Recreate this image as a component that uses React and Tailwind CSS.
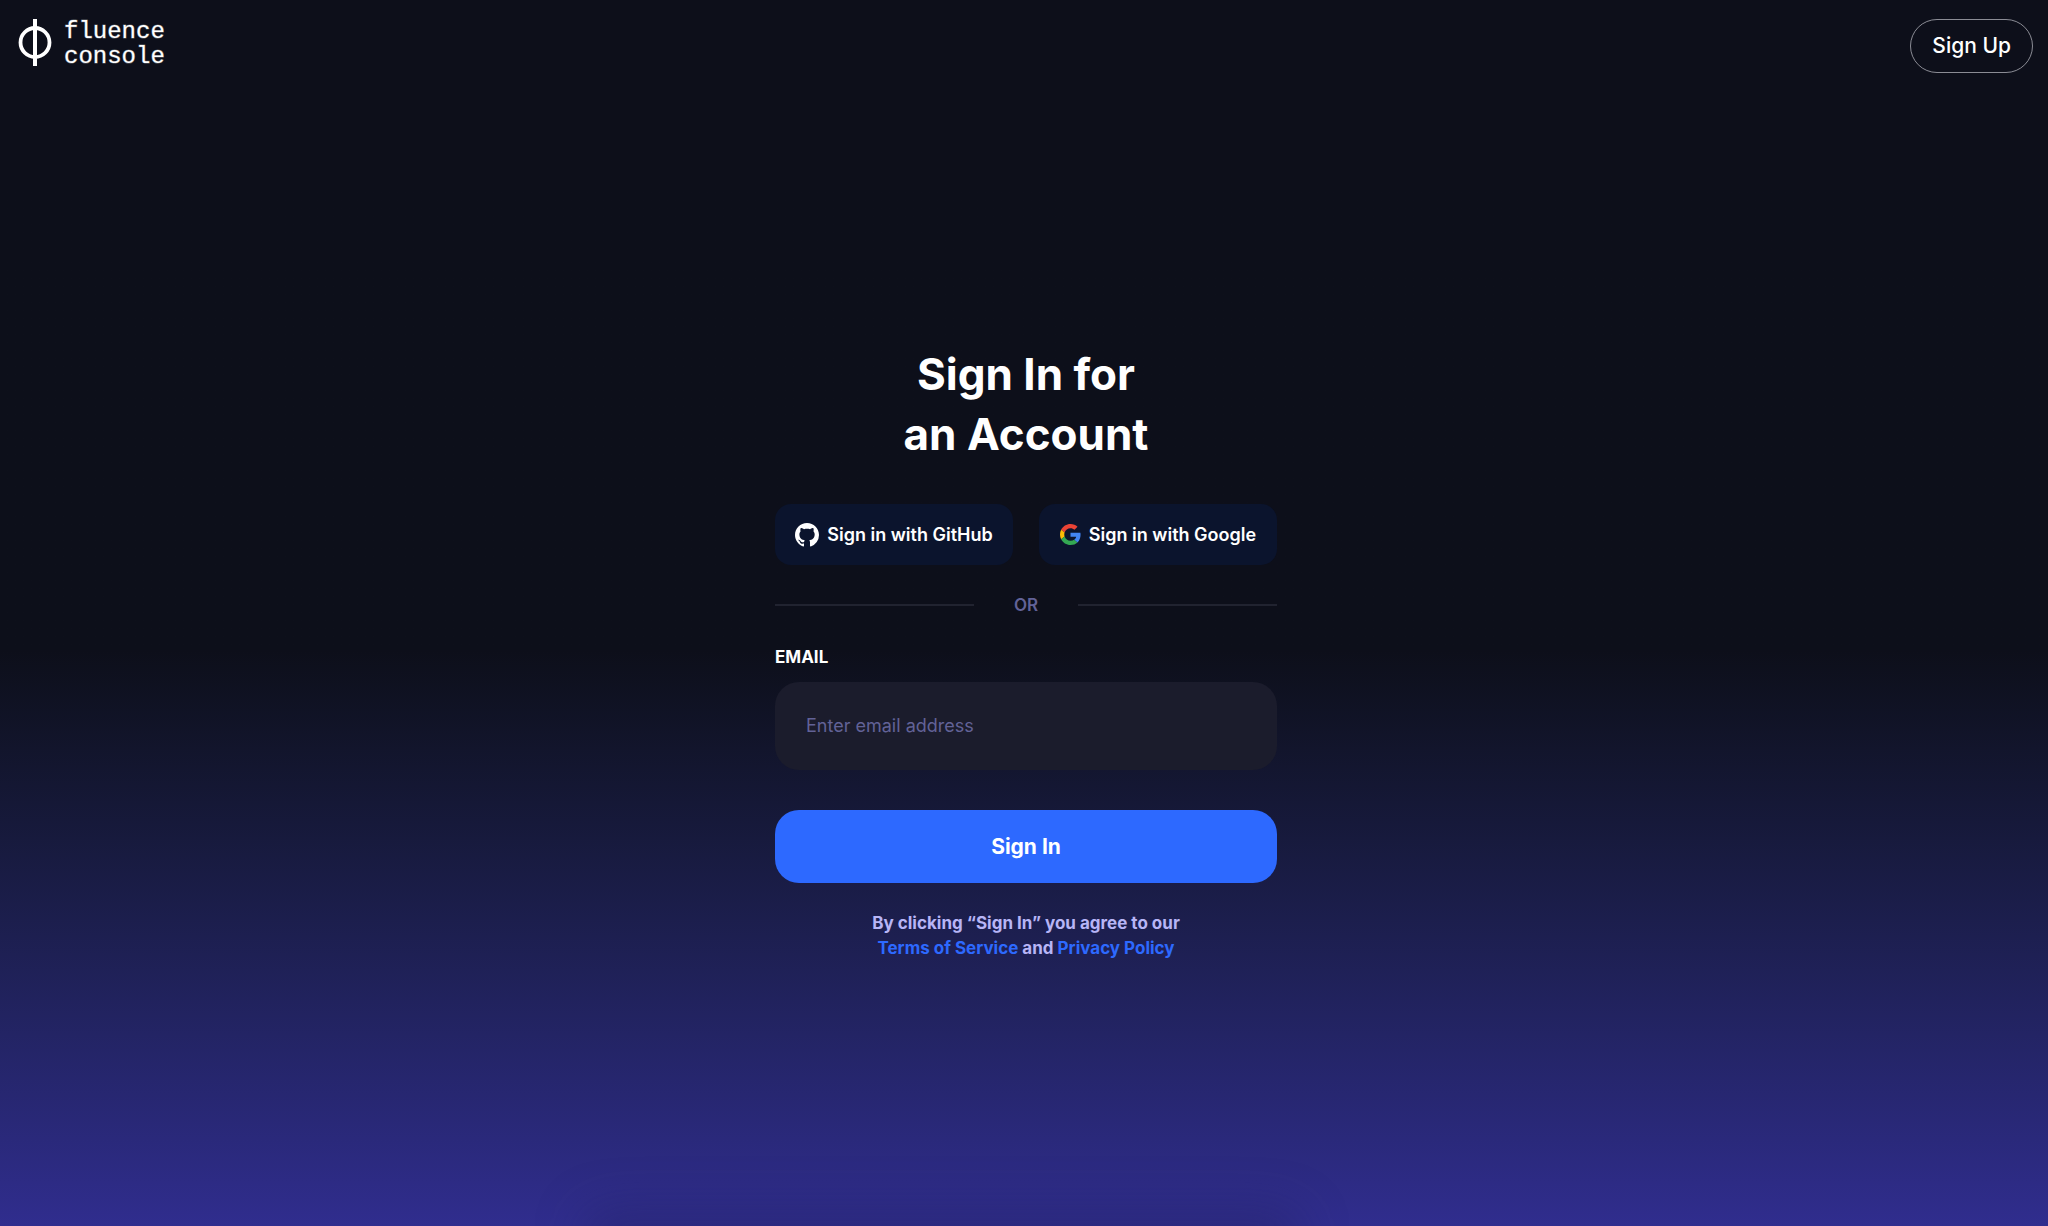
function FluenceMark() {
  return (
    <svg viewBox="0 0 34 48" className="h-12 w-[34px]" fill="none" stroke="#fff" aria-hidden="true">
      <circle cx="17" cy="23.5" r="14.5" strokeWidth="3.8" />
      <path d="M17 0v47" strokeWidth="4" />
    </svg>
  );
}

function GitHubIcon() {
  return (
    <svg viewBox="0 0 16 16" className="size-6 shrink-0" fill="#fff" aria-hidden="true">
      <path d="M8 0C3.58 0 0 3.58 0 8c0 3.54 2.29 6.53 5.47 7.59.4.07.55-.17.55-.38 0-.19-.01-.82-.01-1.49-2.01.37-2.53-.49-2.69-.94-.09-.23-.48-.94-.82-1.13-.28-.15-.68-.52-.01-.53.63-.01 1.08.58 1.23.82.72 1.21 1.87.87 2.33.66.07-.52.28-.87.51-1.07-1.78-.2-3.64-.89-3.64-3.95 0-.87.31-1.59.82-2.15-.08-.2-.36-1.02.08-2.12 0 0 .67-.21 2.2.82.64-.18 1.32-.27 2-.27s1.36.09 2 .27c1.53-1.04 2.2-.82 2.2-.82.44 1.1.16 1.92.08 2.12.51.56.82 1.27.82 2.15 0 3.07-1.87 3.75-3.65 3.95.29.25.54.73.54 1.48 0 1.07-.01 1.93-.01 2.2 0 .21.15.46.55.38A8.01 8.01 0 0 0 16 8c0-4.42-3.58-8-8-8z" />
    </svg>
  );
}

function GoogleIcon() {
  return (
    <svg viewBox="0 0 48 48" className="size-[21px] shrink-0" aria-hidden="true">
      <path fill="#EA4335" d="M24 9.5c3.54 0 6.71 1.22 9.21 3.6l6.85-6.85C35.9 2.38 30.47 0 24 0 14.62 0 6.51 5.38 2.56 13.22l7.98 6.19C12.43 13.72 17.74 9.5 24 9.5z" />
      <path fill="#4285F4" d="M46.98 24.55c0-1.57-.15-3.09-.38-4.55H24v9.02h12.94c-.58 2.96-2.26 5.48-4.78 7.18l7.73 6c4.51-4.18 7.09-10.36 7.09-17.65z" />
      <path fill="#FBBC05" d="M10.53 28.59c-.48-1.45-.76-2.99-.76-4.59s.27-3.14.76-4.59l-7.98-6.19C.92 16.46 0 20.12 0 24c0 3.88.92 7.54 2.56 10.78l7.97-6.19z" />
      <path fill="#34A853" d="M24 48c6.48 0 11.93-2.13 15.89-5.81l-7.73-6c-2.15 1.45-4.92 2.3-8.16 2.3-6.26 0-11.57-4.22-13.47-9.91l-7.98 6.19C6.51 42.62 14.62 48 24 48z" />
    </svg>
  );
}

function ProviderButton({ icon, children }) {
  return (
    <button type="button" className="flex h-[61px] items-center justify-center gap-2 rounded-2xl bg-[#0b142d] text-lg font-semibold whitespace-nowrap">
      {icon}
      {children}
    </button>
  );
}

export default function App() {
  return (
    <div className="relative flex min-h-screen flex-col overflow-hidden bg-[#0d0f1a] bg-linear-to-b from-[#0d0f1a] from-53% to-[#302d8e] font-['Inter',sans-serif] text-white">
      <div className="pointer-events-none absolute -bottom-10 left-[46%] h-14 w-[720px] -translate-x-1/2 rounded-full bg-[#20205c]/40 blur-xl" />
      <header className="flex items-start justify-between px-[15px] pt-[19px]">
        <a href="#home" className="flex items-start gap-3 pl-[3px]">
          <FluenceMark />
          <span className="font-['Liberation_Mono',monospace] text-2xl leading-[25px] [-webkit-text-stroke:1px_#ffffff55]">
            fluence
            <br />
            console
          </span>
        </a>
        <button type="button" className="h-[54px] rounded-full border border-[#8b8c95] px-[21px] text-[21px] font-medium">
          Sign Up
        </button>
      </header>

      <main className="relative flex w-full flex-col items-center pt-[271px] pb-16 pl-1">
        <form className="flex w-full max-w-[502px] flex-col" onSubmit={(e) => e.preventDefault()}>
          <h1 className="text-center text-[44px] leading-[60px] font-bold">
            Sign In for
            <br />
            an Account
          </h1>

          <div className="mt-10 grid grid-cols-2 gap-[26px]">
            <ProviderButton icon={<GitHubIcon />}>Sign in with GitHub</ProviderButton>
            <ProviderButton icon={<GoogleIcon />}>Sign in with Google</ProviderButton>
          </div>

          <div className="mt-7 flex items-center gap-10">
            <div className="h-[2px] flex-1 bg-[#212330]" />
            <span className="text-[17px] leading-6 font-semibold text-[#626297]">OR</span>
            <div className="h-[2px] flex-1 bg-[#212330]" />
          </div>

          <label htmlFor="email" className="mt-7 text-[17px] leading-6 font-bold">
            EMAIL
          </label>
          <input
            id="email"
            type="email"
            placeholder="Enter email address"
            className="mt-[13px] h-[88px] w-full rounded-3xl bg-[#1b1c2c] px-[31px] pb-0.5 text-lg outline-none placeholder:text-[#626297]"
          />

          <button type="submit" className="mt-10 h-[73px] w-full rounded-3xl bg-[#2d69ff] text-[21px] font-bold">
            Sign In
          </button>

          <p className="mt-7 text-center text-[17px] leading-[25px] font-bold text-[#b7b5f6]">
            By clicking “Sign In” you agree to our
            <br />
            <a href="#terms" className="text-[#2d69ff]">Terms of Service</a> and{" "}
            <a href="#privacy" className="text-[#2d69ff]">Privacy Policy</a>
          </p>
        </form>
      </main>
    </div>
  );
}
